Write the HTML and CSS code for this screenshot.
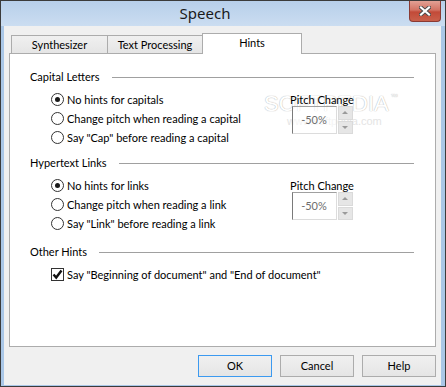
FILE: index.html
```html
<html>
<head>
  <title>Speech</title>
  <link rel="stylesheet" href="styles.css">
</head>
<body>
  <div class="window">
    <!-- title bar -->
    <div class="titlebar">
      <span class="title">Speech</span>
      <div class="close">
        <svg width="12" height="10" viewBox="0 0 12 10">
          <path d="M2 1.5 L10 8.5 M10 1.5 L2 8.5" stroke="#4a4a4a" stroke-width="4" stroke-linecap="square"/>
          <path d="M2 1.5 L10 8.5 M10 1.5 L2 8.5" stroke="#fff" stroke-width="2.2" stroke-linecap="square"/>
        </svg>
      </div>
    </div>

    <div class="client">
      <!-- tabs -->
      <div class="tabs">
        <div class="tab">Synthesizer</div>
        <div class="tab">Text Processing</div>
        <div class="tab active">Hints</div>
      </div>

      <div class="panel">
        <div class="watermark">SOFTPEDIA<sup>™</sup></div>
        <div class="watermark-url">www.softpedia.com</div>

        <!-- capital letters -->
        <div class="group capitals">
          <div class="group-head"><span>Capital Letters</span><span class="rule"></span></div>
          <div class="group-body">
            <div class="options">
              <div class="row"><span class="radio checked"></span>No hints for capitals</div>
              <div class="row"><span class="radio"></span>Change pitch when reading a capital</div>
              <div class="row"><span class="radio"></span>Say "Cap" before reading a capital</div>
            </div>
            <div class="pitch">
              <div class="pitch-label">Pitch Change</div>
              <div class="spin">
                <div class="spin-box">-50%</div>
                <div class="spin-buttons">
                  <div class="spin-btn"><span class="arrow-up"></span></div>
                  <div class="spin-btn"><span class="arrow-down"></span></div>
                </div>
              </div>
            </div>
          </div>
        </div>

        <!-- hypertext links -->
        <div class="group links">
          <div class="group-head"><span>Hypertext Links</span><span class="rule"></span></div>
          <div class="group-body">
            <div class="options">
              <div class="row"><span class="radio checked"></span>No hints for links</div>
              <div class="row"><span class="radio"></span>Change pitch when reading a link</div>
              <div class="row"><span class="radio"></span>Say "Link" before reading a link</div>
            </div>
            <div class="pitch">
              <div class="pitch-label">Pitch Change</div>
              <div class="spin">
                <div class="spin-box">-50%</div>
                <div class="spin-buttons">
                  <div class="spin-btn"><span class="arrow-up"></span></div>
                  <div class="spin-btn"><span class="arrow-down"></span></div>
                </div>
              </div>
            </div>
          </div>
        </div>

        <!-- other hints -->
        <div class="group other">
          <div class="group-head"><span>Other Hints</span><span class="rule"></span></div>
          <div class="group-body">
            <div class="options">
              <div class="row">
                <span class="check">
                  <svg width="11" height="11" viewBox="0 0 11 11"><path d="M1.5 5.5 L4.2 8.5 L9.5 1.5" fill="none" stroke="#111" stroke-width="2.4"/></svg>
                </span>Say "Beginning of document" and "End of document"
              </div>
            </div>
          </div>
        </div>
      </div>

      <!-- dialog buttons -->
      <div class="buttons">
        <div class="button default">OK</div>
        <div class="button">Cancel</div>
        <div class="button">Help</div>
      </div>
    </div>
  </div>
</body>
</html>
```

FILE: styles.css
```css
body {
  margin: 0;
  background: #fff;
  font: 11px Lato, "Liberation Sans", sans-serif;
  color: #000;
}
.window {
  width: 446px;
  height: 387px;
  box-sizing: border-box;
  border: 1px solid #3b3b3b;
  background: #aac7e7;
}
.titlebar {
  height: 25px;
  display: flex;
  align-items: flex-start;
  background: linear-gradient(#b7cfea, #cbddf1);
}
.title {
  flex: 1;
  text-align: center;
  font: 15px "Noto Sans", sans-serif;
  line-height: 25px;
  color: #1a1a1a;
}
.close {
  width: 32px;
  height: 21px;
  margin-right: 4px;
  box-sizing: border-box;
  border: 1px solid #8a3a33;
  border-top: none;
  border-radius: 0 0 4px 4px;
  background: linear-gradient(#e2a195, #d27363 45%, #c24a38 55%, #c9604b);
  display: flex;
  align-items: center;
  justify-content: center;
}
.client {
  height: 359px;
  margin: 0 4px 1px 3px;
  padding: 7px 5px 8px;
  box-sizing: border-box;
  background: #f0f0f0;
  display: flex;
  flex-direction: column;
}
.tabs {
  display: flex;
  align-items: flex-end;
  height: 21px;
  padding-left: 2px;
  margin-bottom: -1px;
  position: relative;
  z-index: 1;
}
.tab {
  box-sizing: border-box;
  height: 19px;
  line-height: 17px;
  text-align: center;
  border: 1px solid #acacac;
  background: linear-gradient(#f0f0f0, #e5e5e5);
  margin-left: -1px;
}
.tab:nth-child(1) { width: 97px; margin-left: 0; }
.tab:nth-child(2) { width: 96px; }
.tab.active {
  width: 100px;
  height: 21px;
  line-height: 18px;
  background: #fff;
  border-bottom: none;
}
.panel {
  position: relative;
  height: 294px;
  box-sizing: border-box;
  border: 1px solid #acacac;
  background: #fff;
  padding: 15px 21px 0 20px;
}
.group {
  position: relative;
}
.group-head {
  display: flex;
  align-items: center;
  height: 16px;
  line-height: 16px;
  margin-bottom: 5px;
}
.rule {
  flex: 1;
  height: 1px;
  margin-left: 12px;
  background: #a0a0a0;
}
.links { margin-top: 8px; }
.other { margin-top: 11px; }
.group-body {
  display: flex;
}
.options {
  width: 241px;
  padding-left: 21px;
}
.row {
  height: 19px;
  display: flex;
  align-items: center;
  white-space: nowrap;
}
.radio {
  width: 13px;
  height: 13px;
  box-sizing: border-box;
  border: 1px solid #333;
  border-radius: 50%;
  margin-right: 3px;
  background: #fff;
  display: flex;
  align-items: center;
  justify-content: center;
}
.radio.checked::after {
  content: "";
  width: 5px;
  height: 5px;
  border-radius: 50%;
  background: #1a1a1a;
}
.check {
  width: 13px;
  height: 13px;
  box-sizing: border-box;
  border: 1px solid #333;
  margin-right: 3px;
  background: #fff;
  display: flex;
  align-items: center;
  justify-content: center;
}
.pitch {
  width: 60px;
  display: flex;
  flex-direction: column;
  align-items: center;
}
.pitch-label {
  line-height: 19px;
  margin-bottom: -3px;
  white-space: nowrap;
}
.spin {
  display: flex;
  gap: 1px;
  height: 28px;
}
.spin-box {
  width: 45px;
  box-sizing: border-box;
  border: 1px solid;
  border-color: #a0a0a0 #dcdcdc #dcdcdc #7a7a7a;
  text-align: center;
  line-height: 26px;
  color: #6d6d6d;
  background: rgba(255, 255, 255, 0.6);
}
.spin-buttons {
  width: 15px;
  display: flex;
  flex-direction: column;
  gap: 1px;
}
.spin-btn {
  flex: 1;
  background: #e6e6e6;
  border: 1px solid #dadada;
  display: flex;
  align-items: center;
  justify-content: center;
}
.arrow-up {
  border: 3px solid transparent;
  border-top: none;
  border-bottom: 3px solid #9a9a9a;
}
.arrow-down {
  border: 3px solid transparent;
  border-bottom: none;
  border-top: 3px solid #9a9a9a;
}
.buttons {
  display: flex;
  justify-content: flex-end;
  gap: 8px;
  margin-top: 8px;
}
.button {
  width: 74px;
  height: 22px;
  box-sizing: border-box;
  border: 1px solid #acacac;
  background: linear-gradient(#f0f0f0, #e5e5e5);
  text-align: center;
  line-height: 20px;
}
.button.default {
  border-color: #3c9af0;
}
.watermark {
  position: absolute;
  left: 254px;
  top: 30px;
  font: 22px "Liberation Sans", sans-serif;
  line-height: 26px;
  color: #fff;
  text-shadow: 0 0 1px #bdbdbd, 0 0 1px #bdbdbd;
}
.watermark sup {
  font-size: 7px;
  vertical-align: 12px;
  margin-left: 2px;
}
.watermark-url {
  position: absolute;
  left: 277px;
  top: 61px;
  font: 11px "Liberation Sans", sans-serif;
  color: #e4e4e4;
}
```
